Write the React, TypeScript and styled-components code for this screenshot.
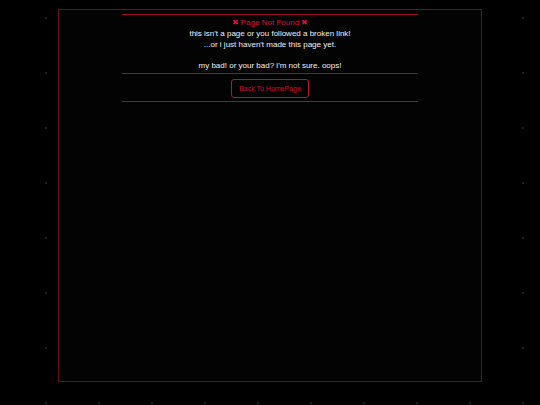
import React from "react";
import styled, { createGlobalStyle } from "styled-components";

const GlobalStyle = createGlobalStyle`
  html, body {
    margin: 0;
    padding: 0;
    background-color: #000000;
  }
  body {
    min-height: 405px;
    background-image:
      radial-gradient(circle at 46px 18px, rgba(120, 120, 120, 0.45) 0.5px, transparent 1px);
    background-size: 53px 55px;
    font-family: "Comic Sans MS", "Liberation Sans", Arial, sans-serif;
  }
`;

const Page = styled.div`
  padding-top: 9px;
  display: flex;
  justify-content: center;
`;

const Frame = styled.main`
  width: 422px;
  height: 371px;
  border: 1px solid #6e0f1c;
  background: #030303;
  display: flex;
  flex-direction: column;
  align-items: center;
`;

const Column = styled.section`
  width: 296px;
  margin-top: 4px;
  display: flex;
  flex-direction: column;
  align-items: center;
`;

const Rule = styled.hr`
  width: 100%;
  margin: 0;
  border: none;
  border-top: 1px solid #9e1020;
`;

const Message = styled.div`
  padding: 2px 0 2px;
  text-align: center;
  color: #f2f2f2;
  font-size: 8px;
  line-height: 11px;
`;

const Title = styled.div`
  color: #d3123a;
`;

const Gap = styled.div`
  height: 10px;
`;

const ButtonRow = styled.div`
  padding: 5px 0 3px;
`;

const HomeButton = styled.button`
  display: block;
  width: 78px;
  height: 19px;
  background: transparent;
  border: 1px solid #c0102a;
  border-radius: 3px;
  color: #c8102e;
  font-family: inherit;
  font-size: 7px;
  cursor: pointer;
  padding: 0;
`;

export default function App() {
  return (
    <>
      <GlobalStyle />
      <Page>
        <Frame>
          <Column>
            <Rule />
            <Message>
              <Title>✖ Page Not Found ✖</Title>
              <div>this isn't a page or you followed a broken link!</div>
              <div>...or i just haven't made this page yet.</div>
              <Gap />
              <div>my bad! or your bad? i'm not sure. oops!</div>
            </Message>
            <Rule />
            <ButtonRow>
              <HomeButton>Back To HomePage</HomeButton>
            </ButtonRow>
            <Rule />
          </Column>
        </Frame>
      </Page>
    </>
  );
}
